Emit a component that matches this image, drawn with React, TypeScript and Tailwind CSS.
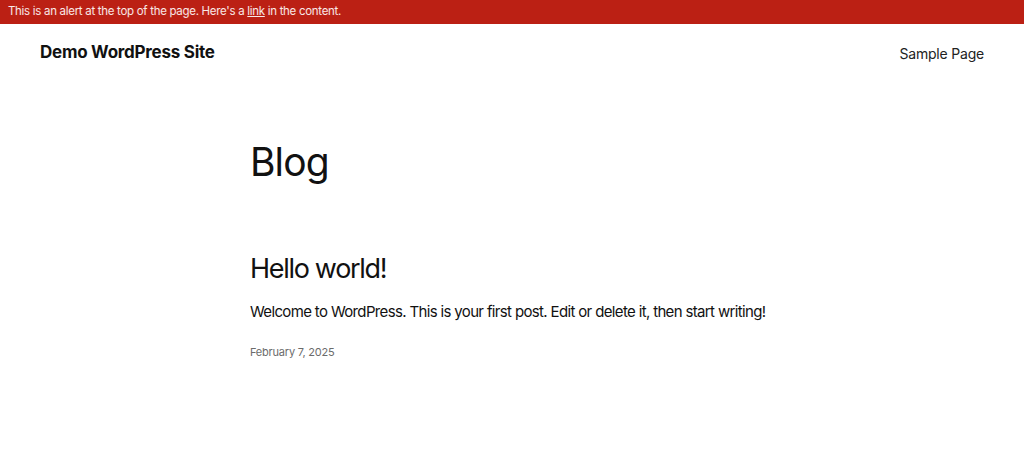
export default function App() {
  const font = { fontFamily: 'Inter, "Noto Sans", sans-serif' };
  return (
    <div className="min-h-[474px] bg-white text-[#111111]" style={font}>
      <div className="h-6 bg-[#bb2014] px-2 flex items-center text-[11.5px] text-white/90 tracking-[-0.3px]">
        This is an alert at the top of the page. Here&apos;s a&nbsp;
        <a href="#" className="underline">link</a>
        &nbsp;in the content.
      </div>
      <header className="flex items-center justify-between px-10 h-[58px]">
        <span className="text-[17px] font-bold tracking-[-0.25px]">Demo WordPress Site</span>
        <span className="text-[14px] tracking-[-0.2px] text-[#222]">Sample Page</span>
      </header>
      <main className="pl-[250px]">
        <h1 className="mt-[60px] text-[39px] leading-none tracking-[-0.9px]">Blog</h1>
        <h2 className="mt-[74px] text-[27px] leading-none tracking-[-1.3px]">Hello world!</h2>
        <p className="mt-[19px] text-[15px] tracking-[-0.65px]">
          Welcome to WordPress. This is your first post. Edit or delete it, then start writing!
        </p>
        <p className="mt-[20px] text-[11px] text-[#6b6b6b] tracking-[-0.2px]">February 7, 2025</p>
      </main>
    </div>
  );
}
